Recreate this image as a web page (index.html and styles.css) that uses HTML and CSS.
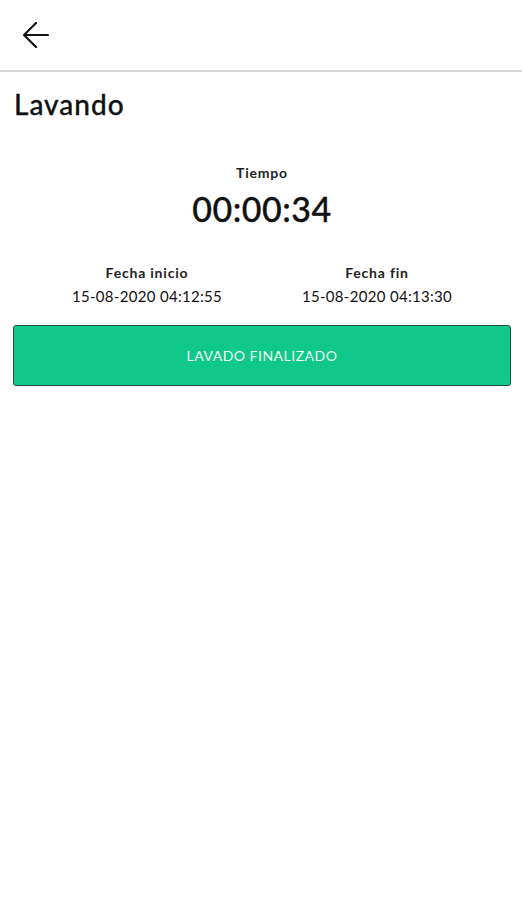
FILE: index.html
```html
<!DOCTYPE html>
<html lang="es">
<head>
    <meta charset="UTF-8">
    <meta name="viewport" content="width=device-width, initial-scale=1.0">
    <title>Lavando</title>
    <link rel="stylesheet" href="styles.css">
</head>
<body>
    <header class="toolbar">
        <button class="back" aria-label="Volver">
            <svg width="28" height="26" viewBox="0 0 28 26">
                <path d="M26 13H2M14 1L2 13l12 12" fill="none" stroke="#111" stroke-width="2.2" stroke-linecap="round" stroke-linejoin="round"/>
            </svg>
        </button>
    </header>

    <main class="content">
        <h1 class="title">Lavando</h1>

        <div class="timer">
            <span class="label">Tiempo</span>
            <span class="time">00:00:34</span>
        </div>

        <div class="dates">
            <div class="date">
                <span class="label">Fecha inicio</span>
                <span class="value">15-08-2020 04:12:55</span>
            </div>
            <div class="date">
                <span class="label">Fecha fin</span>
                <span class="value">15-08-2020 04:13:30</span>
            </div>
        </div>

        <button class="finish">LAVADO FINALIZADO</button>
    </main>
</body>
</html>
```

FILE: styles.css
```css
body {
    font-family: "Lato", "Liberation Sans", sans-serif;
    margin: 0;
    padding: 0;
    background-color: white;
    color: #111;
}
.toolbar {
    height: 70px;
    display: flex;
    align-items: center;
    padding-left: 22px;
    border-bottom: 2px solid #d6d6d6;
}
.back {
    background: none;
    border: none;
    padding: 0;
    display: flex;
    cursor: pointer;
}
.content {
    padding: 0 11px 0 13px;
}
.title {
    margin: 17px 0 0 1px;
    font-size: 28px;
    font-weight: 500;
    letter-spacing: 1px;
    line-height: 30px;
    -webkit-text-stroke: 0.3px #111;
}
.timer {
    display: flex;
    flex-direction: column;
    align-items: center;
    margin-top: 45px;
}
.label {
    font-size: 14px;
    font-weight: bold;
    letter-spacing: 0.8px;
    color: #222;
    line-height: 18px;
}
.time {
    font-size: 34px;
    font-weight: 500;
    letter-spacing: 0.5px;
    line-height: 40px;
    margin-top: 7px;
    -webkit-text-stroke: 0.3px #111;
}
.dates {
    display: grid;
    grid-template-columns: 1fr 1fr;
    padding: 0 19px;
    margin-top: 35px;
}
.date {
    display: flex;
    flex-direction: column;
    align-items: center;
}
.date .value {
    font-size: 15px;
    letter-spacing: 0.3px;
    line-height: 18px;
    margin-top: 5px;
}
.finish {
    display: block;
    width: 100%;
    height: 61px;
    margin-top: 20px;
    background-color: #0fc88a;
    color: #eefcf5;
    border: 1px solid #2b4b3c;
    border-radius: 3px;
    font-family: inherit;
    font-size: 14px;
    letter-spacing: 0.5px;
    cursor: pointer;
}
```
